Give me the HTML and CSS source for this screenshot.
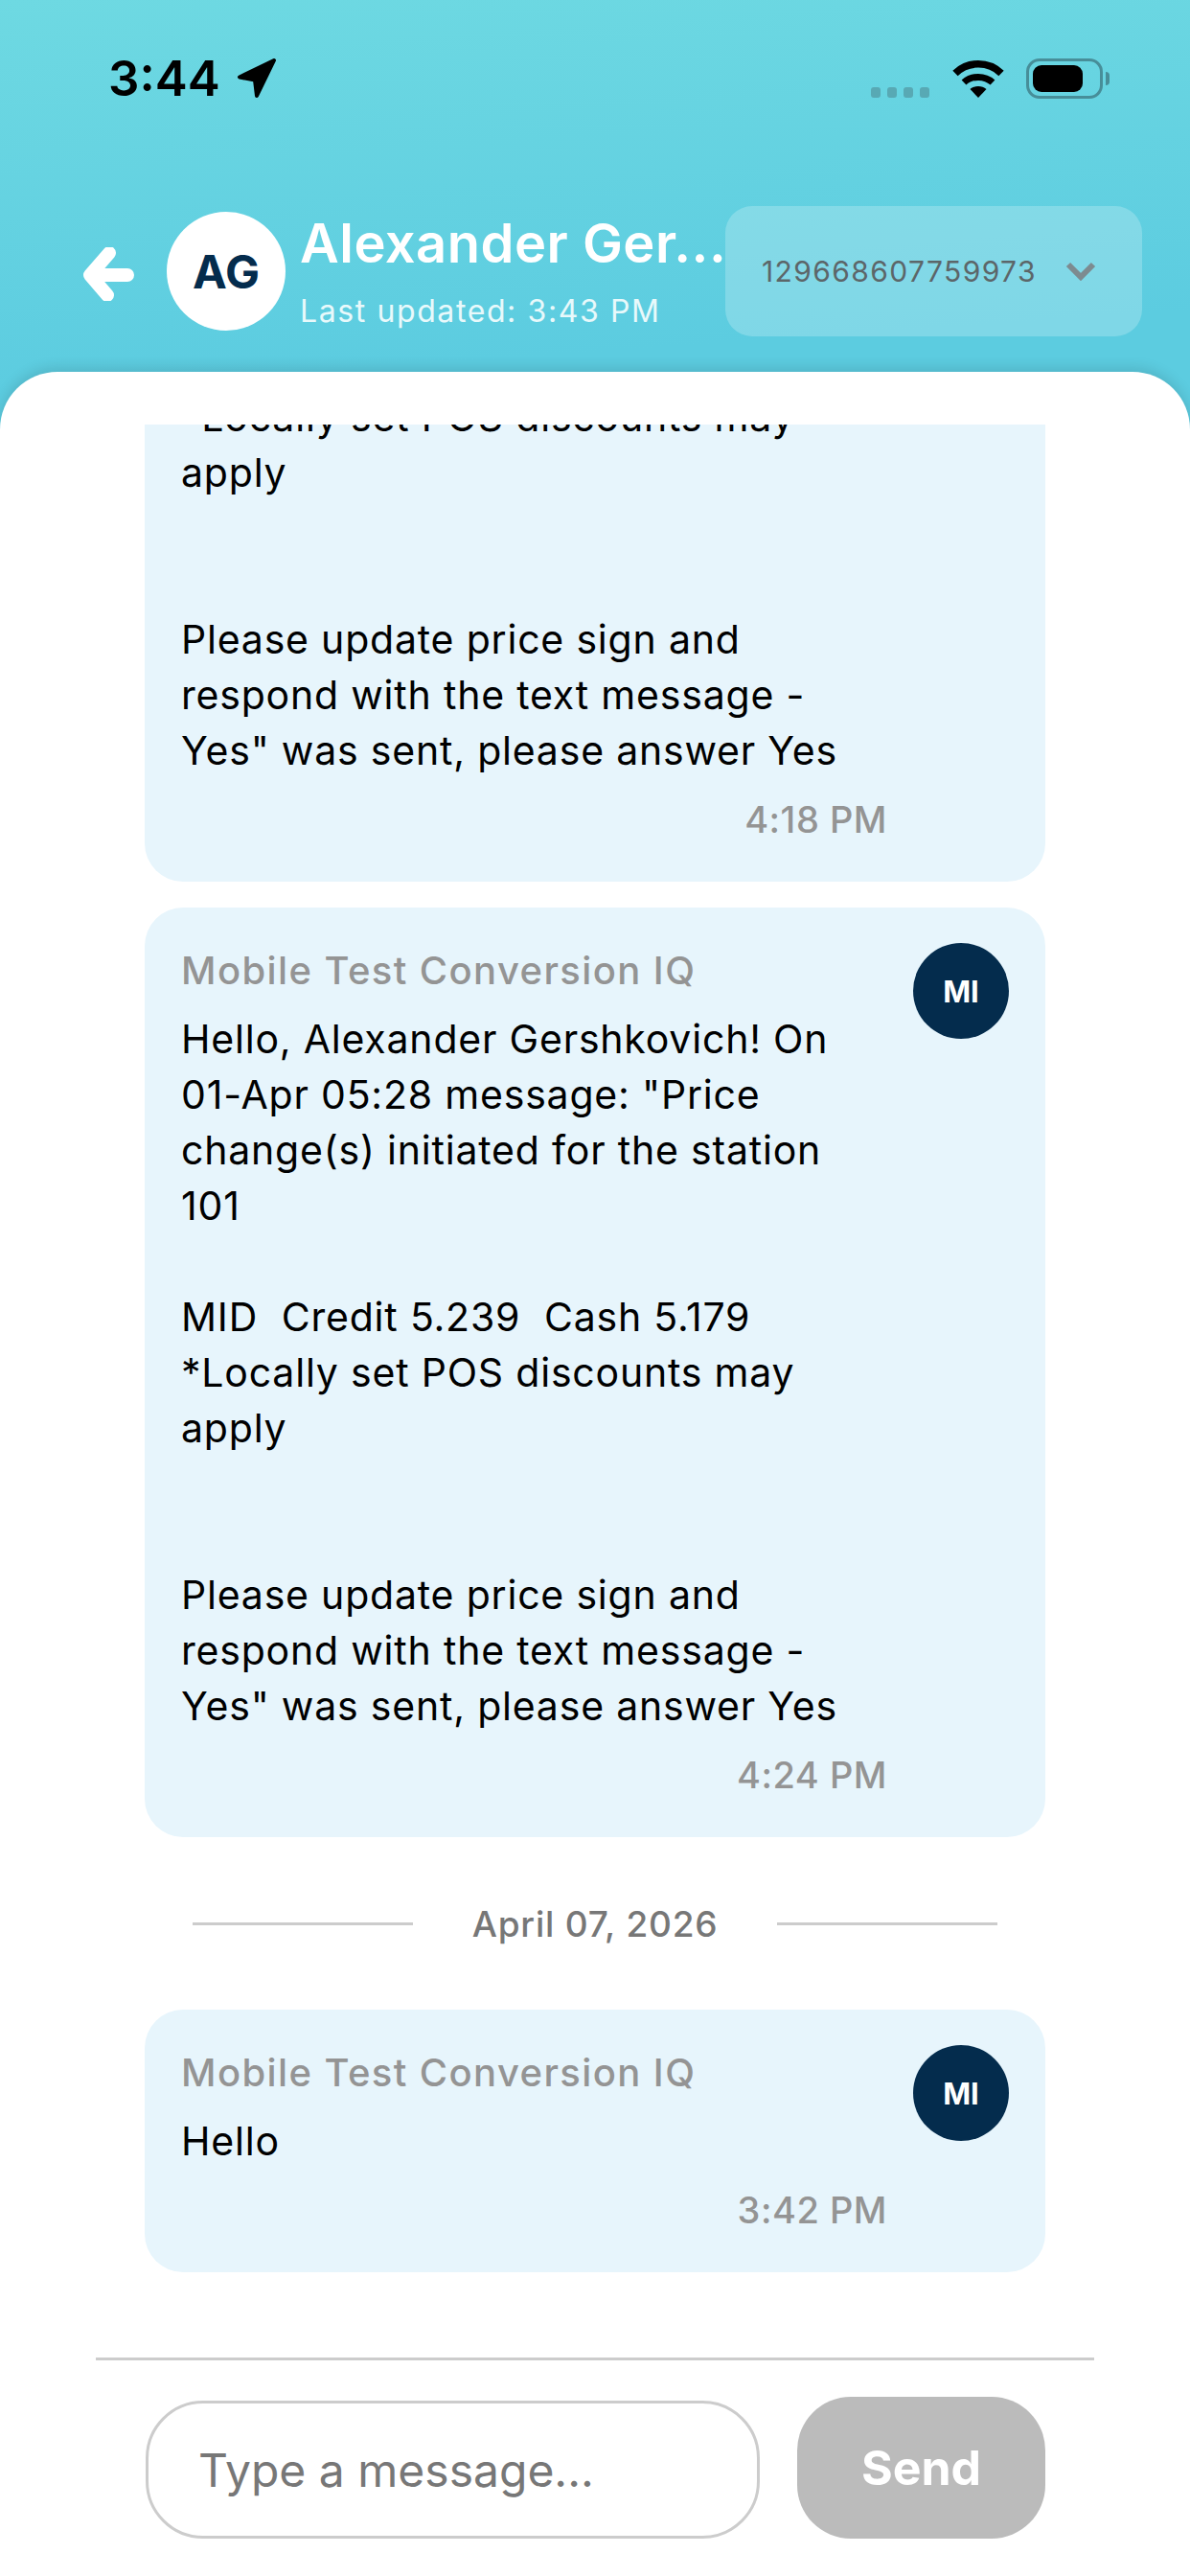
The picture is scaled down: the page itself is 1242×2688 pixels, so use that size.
FILE: index.html
```html
<!DOCTYPE html>
<html>
<head>
    <title>Chat</title>
    <link rel="stylesheet" href="styles.css">
</head>
<body>
    <div class="page">
        <header class="top">
            <div class="status-bar">
                <div class="status-left">
                    <span class="clock">3:44</span>
                    <svg class="location" viewBox="0 0 42 42"><path d="M39 2 3 19.500 19 22.500 21 39Z" fill="#000" stroke="#000" stroke-width="4" stroke-linejoin="round"/></svg>
                </div>
                <div class="status-right">
                    <div class="signal"><i></i><i></i><i></i><i></i></div>
                    <svg class="wifi" viewBox="0 0 54 40">
                        <path d="M3 14.500C16 1.500 38 1.500 51 14.500" fill="none" stroke="#000" stroke-width="7.500"/>
                        <path d="M12 24C20 16.500 34 16.500 42 24" fill="none" stroke="#000" stroke-width="7"/>
                        <path d="M18.500 31C23 27 31 27 35.500 31L27 40Z" fill="#000"/>
                    </svg>
                    <div class="battery"><div class="battery-fill"></div></div>
                    <div class="battery-nub"></div>
                </div>
            </div>
            <div class="chat-head">
                <svg class="back" viewBox="0 0 54 56"><path d="M47 29H10M28 6 8 29 26 50" fill="none" stroke="#fff" stroke-width="14" stroke-linecap="round" stroke-linejoin="round"/></svg>
                <div class="contact-avatar">AG</div>
                <div class="contact">
                    <div class="contact-name">Alexander Ger...</div>
                    <div class="contact-updated">Last updated: 3:43 PM</div>
                </div>
                <div class="number-select">
                    <span>129668607759973</span>
                    <svg class="chevron" viewBox="0 0 32 20"><path d="M3 3 16 16 29 3" fill="none" stroke="#7d8b90" stroke-width="6"/></svg>
                </div>
            </div>
        </header>

        <main class="sheet">
            <div class="messages">
                <div class="msg">
                    <div class="msg-main">
                        <div class="msg-text">*Locally set POS discounts may<br>apply<br><br><br>Please update price sign and<br>respond with the text message -<br>Yes" was sent, please answer Yes</div>
                        <div class="msg-time">4:18 PM</div>
                    </div>
                    <div class="msg-spacer"></div>
                </div>

                <div class="msg">
                    <div class="msg-main">
                        <div class="msg-from">Mobile Test Conversion IQ</div>
                        <div class="msg-text">Hello, Alexander Gershkovich! On<br>01-Apr 05:28 message: "Price<br>change(s) initiated for the station<br>101<br><br>MID&nbsp; Credit 5.239&nbsp; Cash 5.179<br>*Locally set POS discounts may<br>apply<br><br><br>Please update price sign and<br>respond with the text message -<br>Yes" was sent, please answer Yes</div>
                        <div class="msg-time">4:24 PM</div>
                    </div>
                    <div class="msg-avatar">MI</div>
                </div>

                <div class="date-sep">
                    <div class="date-line"></div>
                    <span>April 07, 2026</span>
                    <div class="date-line"></div>
                </div>

                <div class="msg">
                    <div class="msg-main">
                        <div class="msg-from">Mobile Test Conversion IQ</div>
                        <div class="msg-text">Hello</div>
                        <div class="msg-time">3:42 PM</div>
                    </div>
                    <div class="msg-avatar">MI</div>
                </div>
            </div>

            <div class="composer">
                <div class="composer-input">Type a message...</div>
                <div class="send-btn">Send</div>
            </div>
        </main>
    </div>
</body>
</html>
```

FILE: styles.css
```css
* {
    box-sizing: border-box;
}
body {
    margin: 0;
    font-family: Inter, "Open Sans", sans-serif;
    background: #fff;
}
.page {
    width: 1242px;
    height: 2688px;
    display: flex;
    flex-direction: column;
    overflow: hidden;
    background: linear-gradient(176deg, #6ed9e2 0, #5ccce0 410px);
}
.top {
    height: 388px;
    flex: none;
}
.status-bar {
    height: 165px;
    padding: 58px 84px 0 113px;
    display: flex;
    justify-content: space-between;
    align-items: flex-start;
}
.status-left {
    display: flex;
    align-items: center;
    gap: 17px;
}
.clock {
    font-size: 51px;
    font-weight: 600;
    line-height: 48px;
    color: #000;
}
.location {
    width: 42px;
    height: 42px;
}
.status-right {
    display: flex;
    align-items: flex-start;
    padding-top: 3px;
}
.signal {
    display: flex;
    gap: 7px;
    margin: 30px 24px 0 0;
}
.signal i {
    width: 10px;
    height: 11px;
    border-radius: 3px;
    background: #58a9b4;
}
.wifi {
    width: 54px;
    height: 40px;
    margin-top: 1px;
}
.battery {
    width: 80px;
    height: 42px;
    margin-left: 23px;
    padding: 4px;
    border: 3px solid #478e99;
    border-radius: 14px;
}
.battery-fill {
    width: 52px;
    height: 28px;
    background: #000;
    border-radius: 9px;
}
.battery-nub {
    width: 4px;
    height: 14px;
    margin: 14px 0 0 3px;
    background: #478e99;
    border-radius: 0 4px 4px 0;
}
.chat-head {
    display: flex;
    align-items: center;
    height: 136px;
    margin-top: 50px;
    padding: 0 50px 0 86px;
}
.back {
    width: 54px;
    height: 56px;
    flex: none;
    margin: 6px 34px 0 0;
}
.contact-avatar {
    width: 124px;
    height: 124px;
    flex: none;
    display: flex;
    align-items: center;
    justify-content: center;
    background: #fff;
    border-radius: 50%;
    color: #042c4d;
    font-size: 48px;
    font-weight: 700;
}
.contact {
    width: 459px;
    flex: none;
    padding-left: 15px;
    color: #fff;
}
.contact-name {
    font-size: 56px;
    font-weight: 600;
    letter-spacing: 0.5px;
    line-height: 70px;
    white-space: nowrap;
}
.contact-updated {
    font-size: 32px;
    letter-spacing: 1.6px;
    line-height: 44px;
    margin-top: 14px;
    color: #e8f9fb;
}
.number-select {
    width: 435px;
    height: 136px;
    flex: none;
    display: flex;
    align-items: center;
    padding-left: 38px;
    gap: 30px;
    background: rgba(255, 255, 255, 0.22);
    border-radius: 28px;
    color: #5c6669;
    font-size: 30px;
    letter-spacing: 1.4px;
}
.chevron {
    width: 32px;
    height: 20px;
}
.sheet {
    flex: 1;
    min-height: 0;
    display: flex;
    flex-direction: column;
    padding-top: 55px;
    background: #fff;
    border-radius: 60px 60px 0 0;
    box-shadow: 0 -4px 14px rgba(0, 0, 0, 0.12);
}
/* list is anchored to the bottom, older messages get cut off at the top */
.messages {
    flex: 1;
    min-height: 0;
    overflow: hidden;
    display: flex;
    flex-direction: column;
    justify-content: flex-end;
    gap: 27px;
    padding: 0 151px 89px;
}
.msg {
    flex: none;
    display: flex;
    gap: 27px;
    padding: 37px 38px 40px;
    background: #e7f5fc;
    border-radius: 40px;
}
.msg-main {
    flex: 1;
    min-width: 0;
    padding-top: 2px;
}
.msg-from {
    font-size: 40px;
    font-weight: 500;
    letter-spacing: 1.4px;
    line-height: 54px;
    color: #949494;
}
.msg-text {
    margin-top: 15px;
    font-size: 41px;
    letter-spacing: 0.8px;
    line-height: 58px;
    color: #000;
    white-space: nowrap;
}
.msg-time {
    margin-top: 18px;
    font-size: 38px;
    font-weight: 500;
    letter-spacing: 0.5px;
    line-height: 50px;
    color: #949494;
    text-align: right;
}
.msg-avatar {
    width: 100px;
    height: 100px;
    flex: none;
    display: flex;
    align-items: center;
    justify-content: center;
    background: #042c4d;
    border-radius: 50%;
    color: #fff;
    font-size: 31px;
    font-weight: 700;
}
.msg-spacer {
    width: 100px;
    flex: none;
}
.date-sep {
    flex: none;
    display: flex;
    align-items: center;
    justify-content: center;
    gap: 62px;
    height: 126px;
    margin: 0 50px;
    color: #777;
    font-size: 37px;
    font-weight: 500;
    letter-spacing: 0.8px;
}
.date-line {
    flex: 1;
    height: 3px;
    background: #ccc;
}
.composer {
    flex: none;
    display: flex;
    align-items: flex-end;
    gap: 39px;
    margin: 0 100px;
    padding: 38px 51px 39px 52px;
    border-top: 3px solid #ccc;
}
.composer-input {
    flex: 1;
    height: 144px;
    display: flex;
    align-items: center;
    padding-left: 52px;
    border: 3px solid #ccc;
    border-radius: 60px;
    color: #777;
    font-size: 48px;
}
.send-btn {
    width: 259px;
    height: 148px;
    flex: none;
    display: flex;
    align-items: center;
    justify-content: center;
    background: #bbb;
    border-radius: 56px;
    color: #fff;
    font-size: 50px;
    font-weight: 700;
}
```
